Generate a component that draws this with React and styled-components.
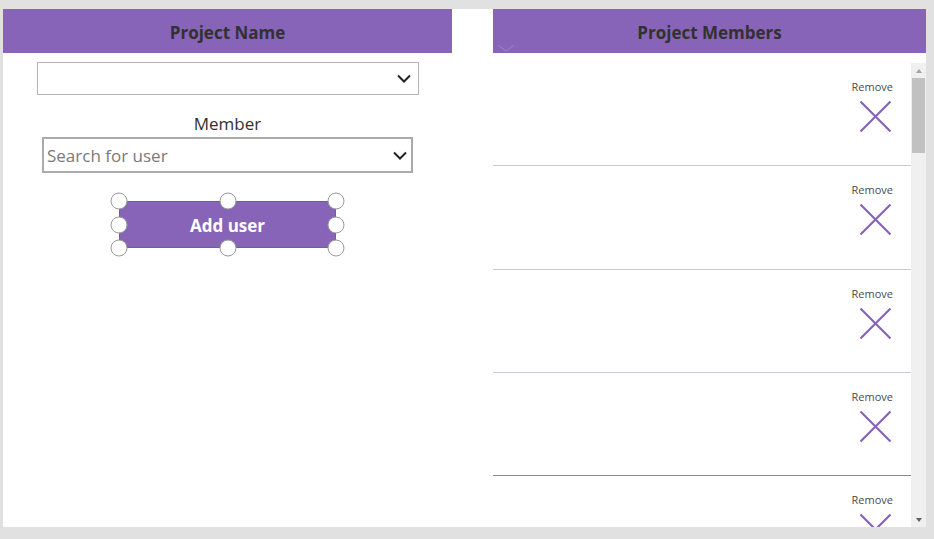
import React from "react";
import styled, { createGlobalStyle } from "styled-components";

const purple = "#8764b8";

const GlobalStyle = createGlobalStyle`
  body {
    margin: 0;
    background: #e1e1e1;
    font-family: "Open Sans", "Noto Sans", sans-serif;
  }
`;

const Page = styled.div`
  padding: 9px 8px 12px 3px;
`;

const Canvas = styled.div`
  width: 923px;
  height: 518px;
  background: #fff;
  display: grid;
  grid-template-columns: 449px 433px;
  column-gap: 41px;
  overflow: hidden;
`;

const Column = styled.div`
  display: flex;
  flex-direction: column;
  align-items: ${(p) => (p.$center ? "center" : "stretch")};
  min-height: 0;
`;

const Header = styled.div`
  position: relative;
  align-self: stretch;
  height: 44px;
  flex: none;
  box-sizing: border-box;
  padding-top: 2px;
  background: ${purple};
  color: #323130;
  font-size: 17px;
  font-weight: 700;
  display: flex;
  align-items: center;
  justify-content: center;
`;

const HeaderChevron = styled.svg`
  position: absolute;
  left: 4px;
  bottom: 0;
`;

const Dropdown = styled.div`
  margin-top: 9px;
  width: 382px;
  height: 33px;
  box-sizing: border-box;
  border: 1px solid #b5b5b5;
  display: flex;
  align-items: center;
  justify-content: space-between;
  padding: 0 7px 0 4px;
`;

const Label = styled.div`
  margin-top: 17px;
  font-size: 17px;
  line-height: 24px;
  color: #323130;
`;

const SearchBox = styled(Dropdown)`
  margin-top: 1px;
  width: 371px;
  height: 36px;
  border: 2px solid #ababab;
  padding: 0 4px 0 3px;
`;

const Placeholder = styled.span`
  font-size: 17px;
  color: #7a7a7a;
`;

const ButtonWrap = styled.div`
  position: relative;
  margin-top: 28px;
`;

const Button = styled.button`
  width: 217px;
  height: 47px;
  padding-top: 2px;
  background: ${purple};
  border: 1px solid #6b6b6b;
  color: #fff;
  font-family: inherit;
  font-size: 17px;
  font-weight: 700;
  cursor: pointer;
`;

const Handle = styled.span`
  position: absolute;
  width: 15px;
  height: 15px;
  border-radius: 50%;
  background: #fff;
  border: 1px solid #9a9a9a;
  transform: translate(-50%, -50%);
  left: ${(p) => p.$x}%;
  top: ${(p) => p.$y}%;
`;

const GalleryBody = styled.div`
  flex: 1;
  display: flex;
  min-height: 0;
`;

const List = styled.div`
  flex: 1;
  padding-top: 10px;
  overflow: hidden;
`;

const Row = styled.div`
  height: 102.3px;
  border-bottom: 1px solid ${(p) => (p.$dark ? "#8e80ba" : "#cdc6de")};
  display: flex;
  justify-content: flex-end;
`;

const RemoveCell = styled.div`
  display: flex;
  flex-direction: column;
  align-items: center;
  padding: 17px 18px 0 0;
`;

const RemoveText = styled.span`
  font-size: 11px;
  line-height: 14px;
  color: #4a4a4a;
`;

const RemoveIcon = styled.svg`
  margin-top: 6px;
  margin-left: 6px;
`;

const Scrollbar = styled.div`
  width: 15px;
  margin-top: 10px;
  background: #f0f0f0;
  display: flex;
  flex-direction: column;
  align-items: center;
`;

const Arrow = styled.div`
  height: 15px;
  display: flex;
  align-items: center;
  justify-content: center;
  &::before {
    content: "";
    border-left: 3.5px solid transparent;
    border-right: 3.5px solid transparent;
    ${(p) =>
      p.$down ? "border-top: 4px solid #606060;" : "border-bottom: 4px solid #a3a3a3;"}
  }
`;

const Thumb = styled.div`
  width: 13px;
  height: 75px;
  background: #c1c1c1;
`;

const Track = styled.div`
  flex: 1;
`;

const Chevron = () => (
  <svg width="14" height="9" viewBox="0 0 14 9">
    <path d="M1 1.5 L7 7.5 L13 1.5" fill="none" stroke="#222" strokeWidth="2" />
  </svg>
);

const rows = [0, 1, 2, 3, 4];

export default function App() {
  return (
    <>
      <GlobalStyle />
      <Page>
        <Canvas>
          <Column $center>
            <Header>Project Name</Header>
            <Dropdown>
              <span />
              <Chevron />
            </Dropdown>
            <Label>Member</Label>
            <SearchBox>
              <Placeholder>Search for user</Placeholder>
              <Chevron />
            </SearchBox>
            <ButtonWrap>
              <Button>Add user</Button>
              {[
                [0, 0], [50, 0], [100, 0],
                [0, 50], [100, 50],
                [0, 100], [50, 100], [100, 100],
              ].map(([x, y]) => (
                <Handle key={`${x}-${y}`} $x={x} $y={y} />
              ))}
            </ButtonWrap>
          </Column>

          <Column>
            <Header>
              Project Members
              <HeaderChevron width="18" height="9" viewBox="0 0 18 9">
                <path d="M1 1 L9 7 L17 1" fill="none" stroke="#9a88bd" strokeWidth="1" />
              </HeaderChevron>
            </Header>
            <GalleryBody>
              <List>
                {rows.map((i) => (
                  <Row key={i} $dark={i === 3}>
                    <RemoveCell>
                      <RemoveText>Remove</RemoveText>
                      <RemoveIcon width="33" height="33" viewBox="0 0 33 33">
                        <path d="M1.5 1.5 L31.5 31.5 M31.5 1.5 L1.5 31.5" stroke={purple} strokeWidth="2.2" fill="none" />
                      </RemoveIcon>
                    </RemoveCell>
                  </Row>
                ))}
              </List>
              <Scrollbar>
                <Arrow />
                <Thumb />
                <Track />
                <Arrow $down />
              </Scrollbar>
            </GalleryBody>
          </Column>
        </Canvas>
      </Page>
    </>
  );
}
